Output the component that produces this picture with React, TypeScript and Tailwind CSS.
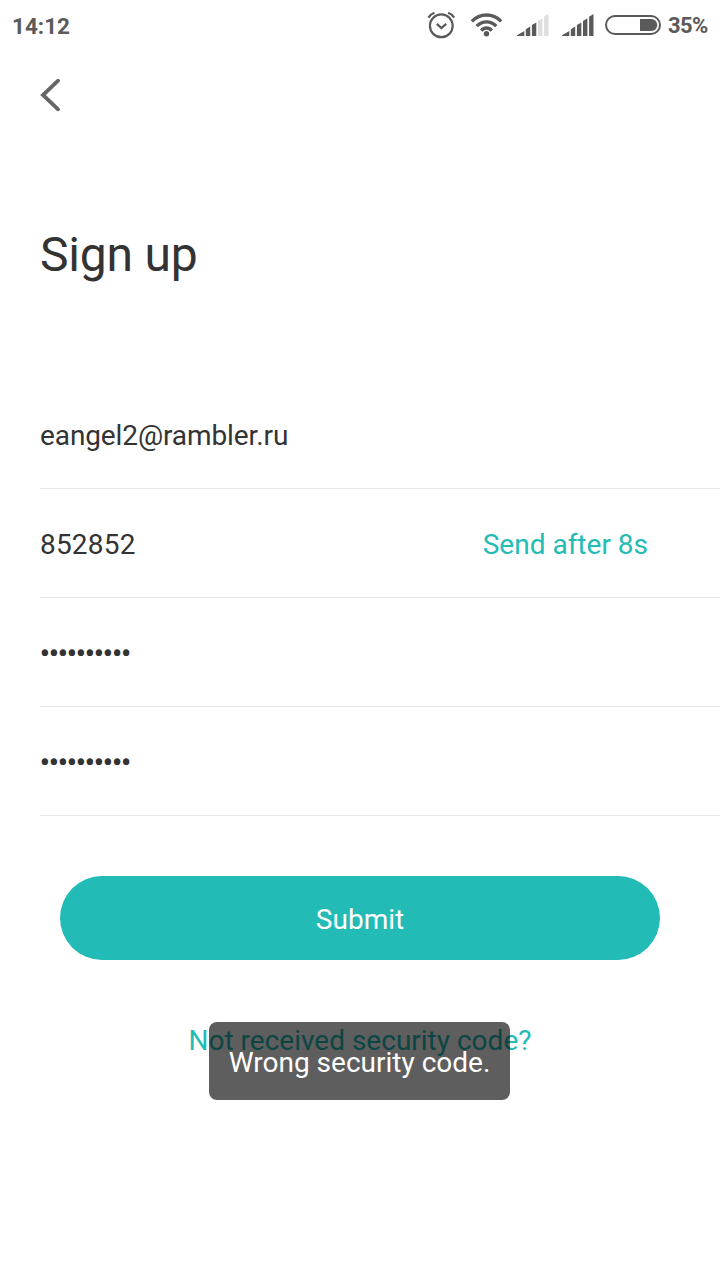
const STATUS_COLOR = '#5a5a5a';

const AlarmIcon = () => (
  <svg width="30" height="30" viewBox="0 0 30 30" fill="none" stroke={STATUS_COLOR} strokeWidth="2.2">
    <circle cx="15.3" cy="15.8" r="11.4" />
    <path d="M10.8 13.8l4.6 4.2 4.8-4.2" strokeWidth="2.3" />
    <path d="M2.4 7.6Q4.3 4.3 8.5 2.8M28.2 7.6Q26.3 4.3 22.1 2.8" strokeWidth="2.2" />
  </svg>
);

const WifiIcon = () => (
  <svg width="34" height="26" viewBox="0 0 34 26" fill="none" stroke={STATUS_COLOR} strokeWidth="3.3">
    <path d="M1.8 9.4Q8 3 16.5 3T31.2 9.4" />
    <path d="M6.7 14.2Q10.8 9.8 16.5 9.8T26.3 14.2" />
    <path d="M11.2 18.6Q13.4 16 16.5 16T21.8 18.6" />
    <circle cx="16.5" cy="21.7" r="2.7" fill={STATUS_COLOR} stroke="none" />
  </svg>
);

const BARS = [
  'M0 22V21.3L7.3 16.9V22z',
  'M8.8 22V15.3L13.2 12.6V22z',
  'M14.9 22V11.1L19.3 8.4V22z',
  'M21 22V6.9L25.4 4.2V22z',
  'M27.1 22V2.7L31.5 0V22z',
];

const SignalIcon = ({ level }: { level: number }) => (
  <svg width="32" height="22" viewBox="0 0 32 22">
    {BARS.map((d, i) => (
      <path key={d} d={d} fill={i < level ? STATUS_COLOR : '#dedede'} />
    ))}
  </svg>
);

const BatteryIcon = () => (
  <svg width="56" height="20" viewBox="0 0 56 20" fill="none">
    <rect x="1" y="1" width="54" height="18" rx="9" stroke={STATUS_COLOR} strokeWidth="2" />
    <path d="M35 4h11.3a6 6 0 0 1 0 12H35z" fill={STATUS_COLOR} />
  </svg>
);

const StatusBar = () => (
  <div className="flex h-[50px] items-center pl-3 pr-3 text-[#5a5a5a]">
    <span className="text-[22.5px] leading-[27px] font-bold mt-0.5">14:12</span>
    <div className="ml-auto flex items-center">
      <div className="mr-[14px]">
        <AlarmIcon />
      </div>
      <div className="mr-[13px]">
        <WifiIcon />
      </div>
      <div className="mr-[13px]">
        <SignalIcon level={3} />
      </div>
      <div className="mr-[11px]">
        <SignalIcon level={5} />
      </div>
      <BatteryIcon />
      <span className="ml-[7px] mt-0.5 w-10 text-[22px] leading-[26px] font-bold tracking-[-0.6px]">35%</span>
    </div>
  </div>
);

type FieldProps = {
  value: string;
  action?: string;
  className?: string;
};

const Field = ({ value, action, className = '' }: FieldProps) => (
  <div className="ml-10 flex h-[109px] items-center justify-between border-b border-[#e8e8e8] pr-[72px] pt-1 text-[28px]">
    <span className={className}>{value}</span>
    {action && <button className="text-[#22bbb5]">{action}</button>}
  </div>
);

const App = () => {
  return (
    <div className="relative h-[1280px] w-[720px] overflow-hidden bg-white font-['Roboto',sans-serif] text-[#333333]">
      <StatusBar />

      <header className="flex h-[90px] items-center pl-10">
        <button aria-label="Back">
          <svg width="22" height="34" viewBox="0 0 22 34" fill="none" stroke="#666666" strokeWidth="3.8" strokeLinecap="round">
            <path d="M18.1 2.7L3 17l15.1 14.3" />
          </svg>
        </button>
      </header>

      <h1 className="mt-[85px] pl-10 text-[48px] leading-[60px] tracking-[-0.2px]">Sign up</h1>

      <form className="mt-[95px]">
        <Field value="eangel2@rambler.ru" className="tracking-[-0.1px]" />
        <Field value="852852" action="Send after 8s" className="tracking-[0.2px]" />
        <Field value="••••••••••" className="-ml-[0.5px] mb-0.5 text-[32px] leading-9 tracking-[-1.78px]" />
        <Field value="••••••••••" className="-ml-[0.5px] mb-0.5 text-[32px] leading-9 tracking-[-1.78px]" />
      </form>

      <div className="mt-[60px] flex flex-col items-center">
        <button className="h-[84px] w-[600px] rounded-full bg-[#22bbb5] pt-1 text-[28px] text-white">Submit</button>
        <a className="mt-[61px] text-[28px] leading-10 text-[#22bbb5]">Not received security code?</a>
      </div>

      {/* Toast */}
      <div className="absolute left-[209px] top-[1022px] flex h-[78px] w-[301px] items-center justify-center rounded-lg bg-black/63 pt-1 text-[28px] text-white">
        Wrong security code.
      </div>
    </div>
  );
};

export default App;
